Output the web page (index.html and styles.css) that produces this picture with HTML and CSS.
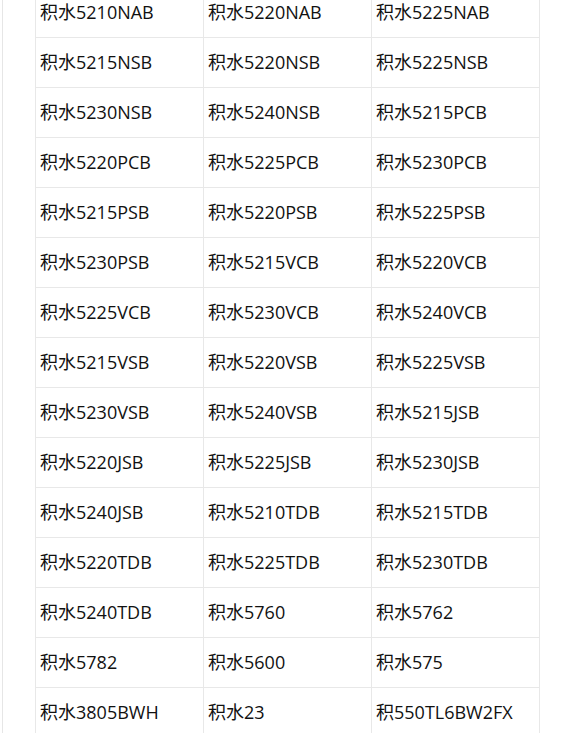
FILE: index.html
```html
<!DOCTYPE html>
<html lang="zh-CN">
<head>
<meta charset="utf-8">
<title>积水型号</title>
<link rel="stylesheet" href="styles.css">
</head>
<body>
<div class="wrap">
  <table class="models">
    <tbody>
      <tr><td>积水5210NAB</td><td>积水5220NAB</td><td>积水5225NAB</td></tr>
      <tr><td>积水5215NSB</td><td>积水5220NSB</td><td>积水5225NSB</td></tr>
      <tr><td>积水5230NSB</td><td>积水5240NSB</td><td>积水5215PCB</td></tr>
      <tr><td>积水5220PCB</td><td>积水5225PCB</td><td>积水5230PCB</td></tr>
      <tr><td>积水5215PSB</td><td>积水5220PSB</td><td>积水5225PSB</td></tr>
      <tr><td>积水5230PSB</td><td>积水5215VCB</td><td>积水5220VCB</td></tr>
      <tr><td>积水5225VCB</td><td>积水5230VCB</td><td>积水5240VCB</td></tr>
      <tr><td>积水5215VSB</td><td>积水5220VSB</td><td>积水5225VSB</td></tr>
      <tr><td>积水5230VSB</td><td>积水5240VSB</td><td>积水5215JSB</td></tr>
      <tr><td>积水5220JSB</td><td>积水5225JSB</td><td>积水5230JSB</td></tr>
      <tr><td>积水5240JSB</td><td>积水5210TDB</td><td>积水5215TDB</td></tr>
      <tr><td>积水5220TDB</td><td>积水5225TDB</td><td>积水5230TDB</td></tr>
      <tr><td>积水5240TDB</td><td>积水5760</td><td>积水5762</td></tr>
      <tr><td>积水5782</td><td>积水5600</td><td>积水575</td></tr>
      <tr><td>积水3805BWH</td><td>积水23</td><td>积550TL6BW2FX</td></tr>
    </tbody>
  </table>
</div>
</body>
</html>
```
FILE: styles.css
```css
html, body {
  margin: 0;
  padding: 0;
  background: #fff;
  overflow: hidden;
}
.wrap {
  margin-left: 2px;
  border-left: 1px solid #e6e6e6;
  padding-left: 32px;
  padding-top: 1px;
  height: 732px;
  overflow: hidden;
}
.models {
  border-collapse: collapse;
  margin-top: -14px;
  table-layout: fixed;
  width: 505px;
  font-family: "Open Sans", "Noto Sans CJK SC", sans-serif;
  font-size: 18px;
  color: #111;
}
.models td {
  width: 163px;
  height: 48px;
  padding: 0 0 1px 4px;
  border: 1px solid #e8e8e8;
  white-space: nowrap;
  vertical-align: middle;
  line-height: 24px;
}
```
